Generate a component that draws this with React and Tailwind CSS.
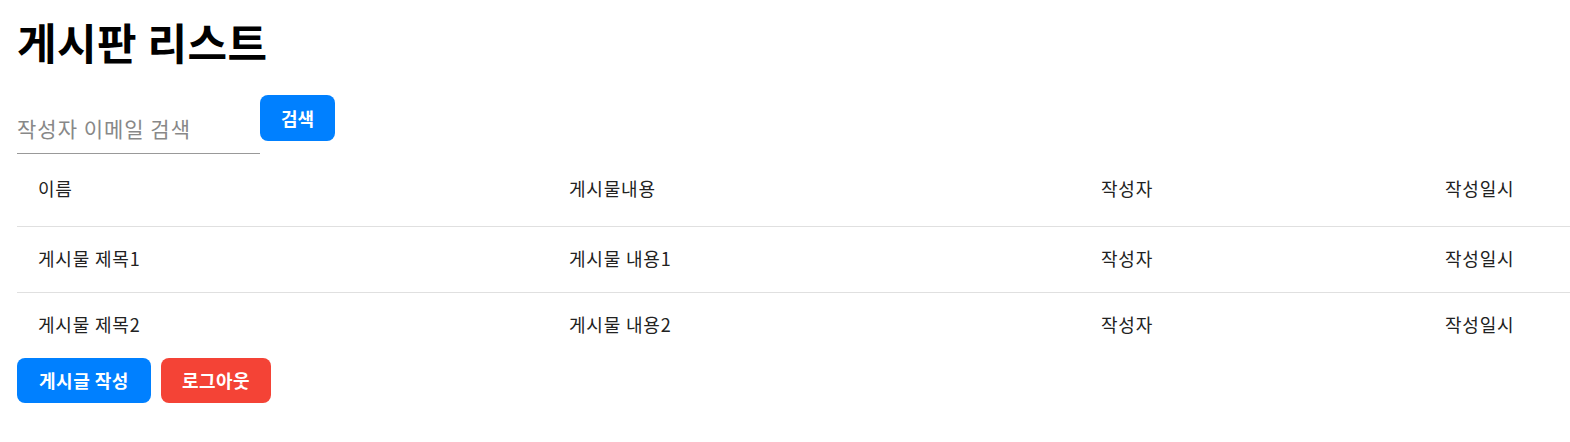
export default function App() {
  const rows = [
    ["게시물 제목1", "게시물 내용1", "작성자", "작성일시"],
    ["게시물 제목2", "게시물 내용2", "작성자", "작성일시"],
  ];
  return (
    <div
      className="min-h-[442px] bg-white pl-[17px] text-[#222]"
      style={{ fontFamily: '"Noto Sans CJK KR", "Noto Sans", sans-serif' }}
    >
      <h1 className="m-0 pt-[12px] text-[43px] font-bold leading-[58px] tracking-[0.5px] text-black">게시판 리스트</h1>
      <div className="mt-[25px] flex items-start">
        <input
          type="text"
          placeholder="작성자 이메일 검색"
          className="mt-[10px] h-[49px] w-[243px] border-b border-[#999] bg-transparent px-0 pb-[2px] text-[21px] tracking-[1px] text-[#222] outline-none placeholder:text-[#888]"
        />
        <button className="h-[46px] w-[75px] rounded-[8px] bg-[#0080ff] text-[18px] font-bold text-white">
          검색
        </button>
      </div>
      <div className="text-[18px] tracking-[0.8px]">
        <div className="grid h-[73px] grid-cols-[531px_532px_344px_1fr] items-center border-b border-[#e0e0e0] pb-[3px]">
          <div className="pl-[21px]">이름</div>
          <div className="pl-[21px]">게시물내용</div>
          <div className="pl-[21px]">작성자</div>
          <div className="pl-[21px]">작성일시</div>
        </div>
        {rows.map((r, i) => (
          <div
            key={i}
            className={
              "grid grid-cols-[531px_532px_344px_1fr] items-center pb-[3px] " +
              (i === 0 ? "h-[66px] border-b border-[#e0e0e0]" : "h-[65px]")
            }
          >
            {r.map((c, j) => (
              <div key={j} className="pl-[21px]">
                {c}
              </div>
            ))}
          </div>
        ))}
      </div>
      <div className="flex gap-[10px]">
        <button className="h-[45px] w-[134px] rounded-[8px] bg-[#0080ff] text-[18px] font-bold tracking-[0.5px] text-white">
          게시글 작성
        </button>
        <button className="h-[45px] w-[110px] rounded-[8px] bg-[#f44336] text-[18px] font-bold tracking-[0.5px] text-white">
          로그아웃
        </button>
      </div>
    </div>
  );
}
